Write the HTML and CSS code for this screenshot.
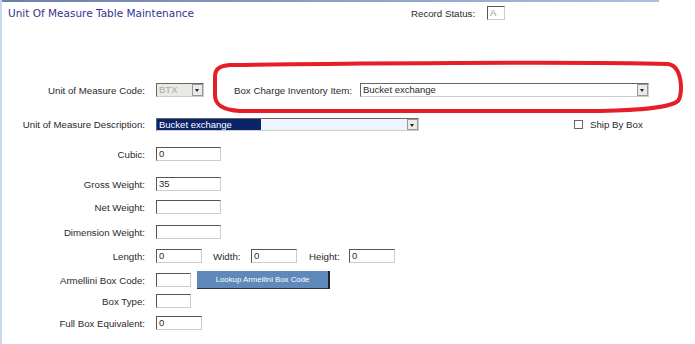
FILE: index.html
```html
<!DOCTYPE html>
<html lang="en">
<head>
  <meta charset="UTF-8" />
  <title>Unit Of Measure Table Maintenance</title>
  <link rel="stylesheet" href="styles.css">
</head>
<body>
  <div class="page">
    <div class="topbar"></div>

    <div class="header">
      <div class="title">Unit Of Measure Table Maintenance</div>
      <div class="status">
        <span class="status-label">Record Status:</span>
        <span class="input status-input">A</span>
      </div>
    </div>

    <div class="form">
      <div class="row row-code">
        <label class="label">Unit of Measure Code:</label>
        <div class="select disabled code-select">
          <span class="select-text">BTX</span>
          <span class="arrow"></span>
        </div>
        <label class="label-inline box-charge">Box Charge Inventory Item:</label>
        <div class="select item-select">
          <span class="select-text">Bucket exchange</span>
          <span class="arrow"></span>
        </div>
      </div>

      <div class="row row-desc">
        <label class="label">Unit of Measure Description:</label>
        <div class="select desc-select">
          <span class="select-text"><span class="highlight">Bucket exchange</span></span>
          <span class="arrow"></span>
        </div>
        <div class="ship">
          <span class="checkbox"></span>
          <span>Ship By Box</span>
        </div>
      </div>

      <div class="row row-cubic">
        <label class="label">Cubic:</label>
        <span class="input w64">0</span>
      </div>

      <div class="row row-gross">
        <label class="label">Gross Weight:</label>
        <span class="input w64">35</span>
      </div>

      <div class="row row-net">
        <label class="label">Net Weight:</label>
        <span class="input w64"></span>
      </div>

      <div class="row row-dim">
        <label class="label">Dimension Weight:</label>
        <span class="input w64"></span>
      </div>

      <div class="row row-len">
        <label class="label">Length:</label>
        <span class="input w46">0</span>
        <label class="label-inline dim-width">Width:</label>
        <span class="input w46">0</span>
        <label class="label-inline dim-height">Height:</label>
        <span class="input w46">0</span>
      </div>

      <div class="row row-arm">
        <label class="label">Armellini Box Code:</label>
        <span class="input w34"></span>
        <button class="lookup">Lookup Armellini Box Code</button>
      </div>

      <div class="row row-type">
        <label class="label">Box Type:</label>
        <span class="input w34"></span>
      </div>

      <div class="row row-full">
        <label class="label">Full Box Equivalent:</label>
        <span class="input w46">0</span>
      </div>
    </div>

    <svg class="mark" width="695" height="344" viewBox="0 0 695 344">
      <path d="M 230 65 C 400 63, 600 62, 668 64 C 683 66, 683 95, 678 101 C 670 108, 640 110, 600 111 L 240 111 C 221 110, 215 104, 215 95 L 215 77 C 215 69, 219 66, 230 65 Z"
            fill="none" stroke="#e61e28" stroke-width="4" />
    </svg>
  </div>
</body>
</html>
```

FILE: styles.css
```css
body {
  margin: 0;
  font-family: "Liberation Sans", Arial, sans-serif;
  font-size: 9.7px;
  color: #2a2a2a;
  background: white;
}
.page {
  position: relative;
  height: 344px;
  border-left: 2px solid #c8d8ee;
  box-sizing: border-box;
  overflow: hidden;
}
.topbar {
  width: 657px;
  height: 2px;
  background: linear-gradient(to right, #6d7fa6, #a9c1e2);
}
.header {
  display: flex;
  align-items: center;
  height: 22px;
}
.title {
  width: 403px;
  padding-left: 6px;
  font-family: "DejaVu Sans", Verdana, sans-serif;
  font-size: 10.5px;
  color: #33338f;
}
.status {
  display: flex;
  align-items: center;
}
.status-label {
  width: 76px;
}
.status-input {
  width: 18px;
  color: #999;
}
.form {
  padding-top: 59px;
}
.row {
  display: flex;
  align-items: center;
  height: 14px;
}
.label {
  width: 143px;
  text-align: right;
  margin-right: 11px;
}
.label-inline {
  white-space: nowrap;
}
.input {
  display: inline-block;
  box-sizing: border-box;
  height: 14px;
  line-height: 11px;
  padding-left: 2px;
  font-size: 9.5px;
  border-top: 1px solid #555;
  border-left: 1px solid #555;
  border-right: 1px solid #ccc;
  border-bottom: 1px solid #ccc;
  background: white;
}
.w64 { width: 65px; }
.w46 { width: 46px; }
.w34 { width: 35px; }
.select {
  display: flex;
  box-sizing: border-box;
  height: 14px;
  border-top: 1px solid #666;
  border-left: 1px solid #666;
  border-right: 1px solid #ccc;
  border-bottom: 1px solid #ccc;
  background: white;
  font-size: 9.5px;
}
.select-text {
  flex: 1;
  line-height: 12px;
  padding-left: 2px;
  white-space: nowrap;
}
.arrow {
  position: relative;
  width: 11px;
  background: #ecebe7;
  border: 1px solid #999;
  box-sizing: border-box;
}
.arrow::after {
  content: "";
  position: absolute;
  left: 2px;
  top: 4px;
  border-left: 2.5px solid transparent;
  border-right: 2.5px solid transparent;
  border-top: 3px solid #222;
}
.disabled {
  background: #ebe9e4;
  color: #aaa;
}
.code-select {
  width: 48px;
}
.box-charge {
  width: 126px;
  margin-left: 30px;
}
.item-select {
  width: 289px;
}
.row-desc {
  margin-top: 21px;
  height: 13px;
}
.desc-select {
  width: 263px;
  height: 13px;
  background: #eef4fb;
}
.desc-select .select-text {
  padding-left: 0;
  line-height: 11px;
}
.highlight {
  display: inline-block;
  width: 102px;
  padding-left: 2px;
  line-height: 11px;
  background: #0a246a;
  color: white;
}
.ship {
  display: flex;
  align-items: center;
  margin-left: 155px;
}
.checkbox {
  width: 7px;
  height: 7px;
  border: 1px solid #666;
  margin-right: 7px;
}
.row-cubic { margin-top: 16px; }
.row-gross { margin-top: 16px; }
.row-net { margin-top: 9px; }
.row-dim { margin-top: 11px; }
.row-len { margin-top: 10px; }
.dim-width {
  width: 38px;
  margin-left: 11px;
}
.dim-height {
  width: 40px;
  margin-left: 12px;
}
.row-arm {
  margin-top: 8px;
  height: 18px;
}
.lookup {
  margin-left: 6px;
  width: 133px;
  height: 18px;
  padding: 0;
  font-family: "Liberation Sans", Arial, sans-serif;
  font-size: 7.8px;
  color: white;
  background: #5f89ba;
  border: none;
  border-right: 2px solid #222;
  border-bottom: 1px solid #333;
}
.row-type { margin-top: 5px; }
.row-full { margin-top: 8px; }
.mark {
  position: absolute;
  left: -2px;
  top: 0;
  pointer-events: none;
}
```
